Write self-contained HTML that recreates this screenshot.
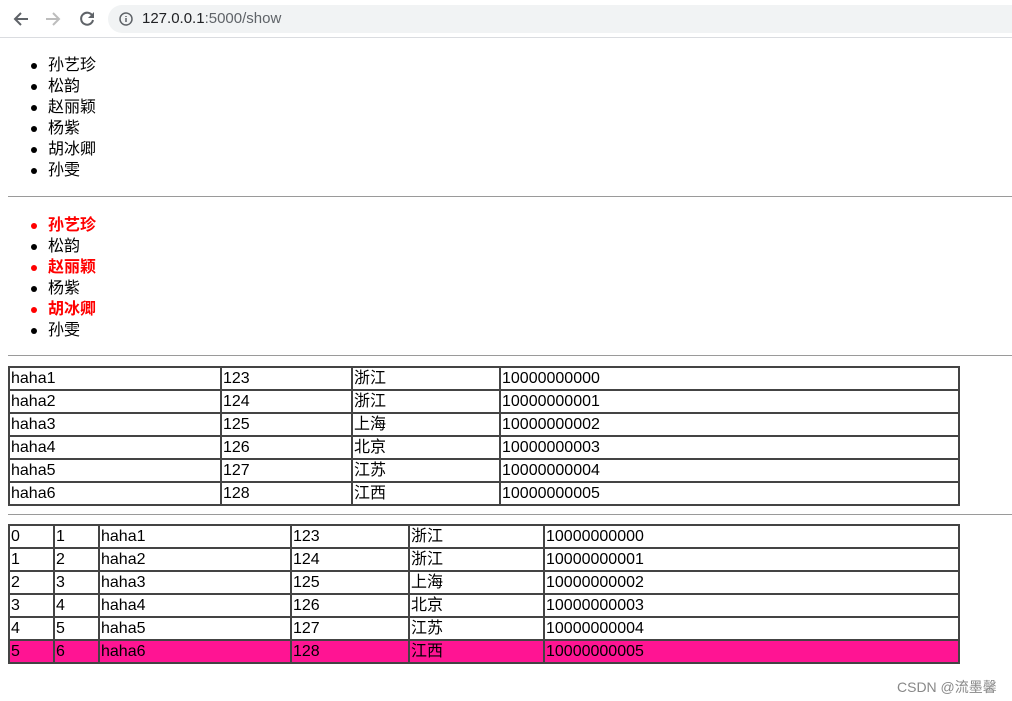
<!DOCTYPE html>
<html><head><meta charset="utf-8"><style>
body{margin:0;width:1012px;height:701px;background:#fff;position:relative;overflow:hidden;font-family:"Liberation Sans","Noto Sans CJK SC",sans-serif;font-size:16px;color:#000}
.bar{position:absolute;left:0;top:0;width:1012px;height:37px;background:#fff;border-bottom:1px solid #dadce0}
.url{position:absolute;left:108px;top:5px;width:920px;height:28px;border-radius:14px;background:#f1f3f4}
.url span{position:absolute;left:34px;top:5px;font-size:15px;color:#202124;line-height:18px}
.li{position:absolute;left:48px;line-height:21px;height:21px}
.li:before{content:"";position:absolute;left:-17px;top:8px;width:6px;height:6px;border-radius:3px;background:currentColor}
.r{color:#f00;font-weight:bold}
hr{position:absolute;left:8px;width:1004px;margin:0;border:0;border-top:1px solid #9a9a9a;height:0}
table{position:absolute;left:8px;border-collapse:collapse;table-layout:fixed;width:952px}
td{border:2px solid #444;padding:1px 0 0 1px;height:20px;line-height:20px;white-space:nowrap;overflow:hidden;font-size:16px;box-sizing:border-box}
tr{height:23px}
.pk td{background:#ff1493}
.wm{position:absolute;left:897px;top:677px;font-size:14px;color:#888}
</style></head><body>
<div class="bar">
<svg style="position:absolute;left:12px;top:10px" width="18" height="18" viewBox="0 0 18 18"><path d="M16 9H3M9 3L3 9l6 6" stroke="#5f6368" stroke-width="2" fill="none"/></svg>
<svg style="position:absolute;left:44px;top:10px" width="18" height="18" viewBox="0 0 18 18"><path d="M2 9h13M9 3l6 6-6 6" stroke="#bdbdbd" stroke-width="2" fill="none"/></svg>
<svg style="position:absolute;left:78px;top:10px" width="18" height="18" viewBox="0 0 18 18"><path d="M14.5 6A6 6 0 1 0 15 10" stroke="#5f6368" stroke-width="2" fill="none"/><path d="M16 2v6h-6z" fill="#5f6368"/></svg>
<div class="url"><svg style="position:absolute;left:11px;top:7px" width="14" height="14" viewBox="0 0 14 14"><circle cx="7" cy="7" r="6" stroke="#5f6368" stroke-width="1.5" fill="none"/><path d="M7 6v4M7 4v1" stroke="#5f6368" stroke-width="1.5"/></svg><span>127.0.0.1<span style="position:static;color:#5f6368">:5000/show</span></span></div>
</div>
<div class="li" style="top:55px">孙艺珍</div>
<div class="li" style="top:76px">松韵</div>
<div class="li" style="top:97px">赵丽颖</div>
<div class="li" style="top:118px">杨紫</div>
<div class="li" style="top:139px">胡冰卿</div>
<div class="li" style="top:160px">孙雯</div>
<hr style="top:196px">
<div class="li r" style="top:215px">孙艺珍</div>
<div class="li" style="top:236px">松韵</div>
<div class="li r" style="top:257px">赵丽颖</div>
<div class="li" style="top:278px">杨紫</div>
<div class="li r" style="top:299px">胡冰卿</div>
<div class="li" style="top:320px">孙雯</div>
<hr style="top:355px">
<table style="top:366px"><colgroup><col style="width:212px"><col style="width:131px"><col style="width:148px"><col></colgroup>
<tr><td>haha1</td><td>123</td><td>浙江</td><td>10000000000</td></tr>
<tr><td>haha2</td><td>124</td><td>浙江</td><td>10000000001</td></tr>
<tr><td>haha3</td><td>125</td><td>上海</td><td>10000000002</td></tr>
<tr><td>haha4</td><td>126</td><td>北京</td><td>10000000003</td></tr>
<tr><td>haha5</td><td>127</td><td>江苏</td><td>10000000004</td></tr>
<tr><td>haha6</td><td>128</td><td>江西</td><td>10000000005</td></tr>
</table>
<hr style="top:514px">
<table style="top:524px"><colgroup><col style="width:45px"><col style="width:45px"><col style="width:192px"><col style="width:118px"><col style="width:135px"><col></colgroup>
<tr><td>0</td><td>1</td><td>haha1</td><td>123</td><td>浙江</td><td>10000000000</td></tr>
<tr><td>1</td><td>2</td><td>haha2</td><td>124</td><td>浙江</td><td>10000000001</td></tr>
<tr><td>2</td><td>3</td><td>haha3</td><td>125</td><td>上海</td><td>10000000002</td></tr>
<tr><td>3</td><td>4</td><td>haha4</td><td>126</td><td>北京</td><td>10000000003</td></tr>
<tr><td>4</td><td>5</td><td>haha5</td><td>127</td><td>江苏</td><td>10000000004</td></tr>
<tr class="pk"><td>5</td><td>6</td><td>haha6</td><td>128</td><td>江西</td><td>10000000005</td></tr>
</table>
<div class="wm">CSDN @流墨馨</div>
</body></html>
